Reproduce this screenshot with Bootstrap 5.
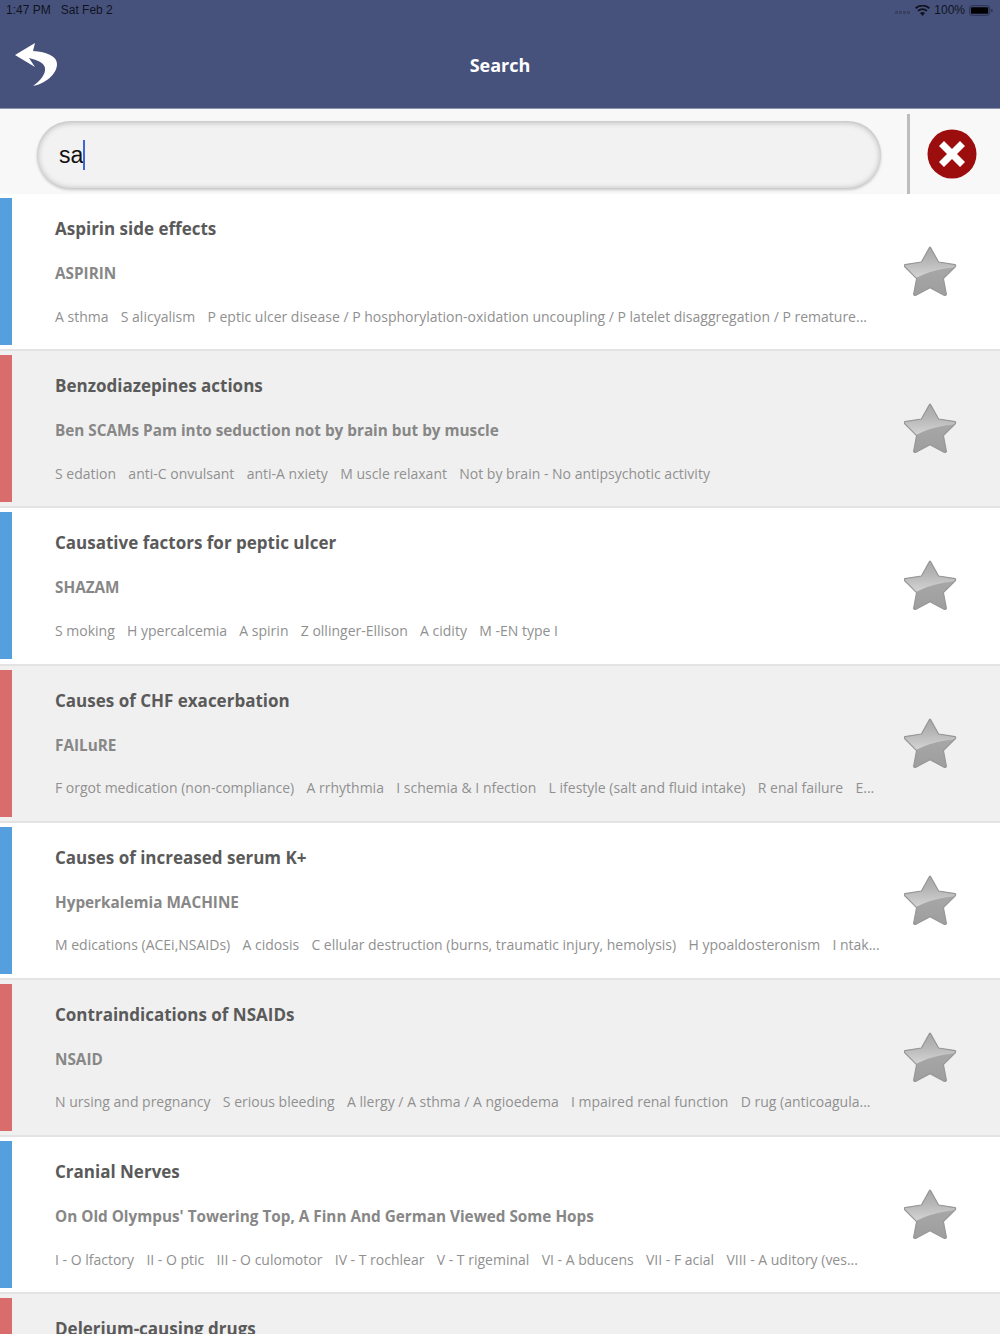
<!DOCTYPE html>
<html lang="en">
<head>
    <meta charset="UTF-8">
    <title>Search</title>
    <link href="https://cdn.jsdelivr.net/npm/bootstrap@5.3.0/dist/css/bootstrap.min.css" rel="stylesheet">
    <style>
        body { font-family: "Open Sans", sans-serif; background: #fff; height: 1334px; overflow: hidden; }

        /* Header */
        .top-head { background: #47527c; height: 109px; border-bottom: 1px solid #8d94b0; }
        .status-row { height: 20px; padding: 0 7px 0 6px; font-family: "Liberation Sans", sans-serif; font-size: 12px; color: #10131f; line-height: 20px; }
        .sat-date { margin-left: 10px; }
        .head-main { height: 88px; padding-left: 15px; }
        .back-icon { width: 44px; height: 45px; }
        .head-title { left: 0; right: 0; top: 52px; text-align: center; font-size: 18px; font-weight: 700; color: #fff; line-height: 26px; }

        /* Search */
        .search-row { height: 85px; background: #f8f8f8; padding-left: 37px; }
        .search-pill { width: 844px; height: 67px; margin-top: 12px; border-radius: 34px; background: #f2f2f2; padding-left: 22px; font-family: "Liberation Sans", sans-serif; font-size: 23px; color: #111; box-shadow: inset 0 1px 6px rgba(0,0,0,.28), 0 2px 3px rgba(0,0,0,.2); }
        .search-text { margin-top: 2px; }
        .caret-bar { width: 2px; height: 30px; background: #3f66d8; }
        .search-div { width: 3px; height: 80px; margin: 5px 0 0 26px; background: #bdbdbd; }
        .clear-icon { width: 50px; height: 50px; margin: 20px 0 0 17px; }

        /* Rows */
        .memo-row { height: 157.2px; padding-top: 4px; border-bottom: 2px solid #e3e3e3; }
        .memo-row.alt { background: #f0f0f0; }
        .color-bar { width: 12px; height: 147px; flex: none; background: #559fde; }
        .alt .color-bar { background: #d96c6c; }
        .memo-body { width: 835px; padding: 19px 0 0 43px; flex: none; }
        .memo-title { font-size: 17px; font-weight: 700; color: #5a5a5a; line-height: 24px; white-space: nowrap; }
        .memo-sub { font-size: 15.3px; font-weight: 700; color: #878787; line-height: 22px; margin-top: 21px; white-space: nowrap; }
        .memo-items { font-size: 14px; color: #909090; line-height: 20px; margin-top: 22.5px; white-space: nowrap; }
        .memo-items span { margin-right: 12.3px; }
        .star-icon { width: 54px; height: 52px; margin: 48px 0 0 57px; }
    </style>
</head>
<body>

<svg width="0" height="0" class="d-block">
    <defs>
        <linearGradient id="starBase" x1="0" y1="0" x2="0" y2="1">
            <stop offset="0" stop-color="#adadad"/>
            <stop offset="1" stop-color="#9e9e9e"/>
        </linearGradient>
        <linearGradient id="starGloss" x1="0" y1="0" x2="0" y2="1">
            <stop offset="0" stop-color="#a6a6a6"/>
            <stop offset="0.4" stop-color="#b4b4b4"/>
            <stop offset="1" stop-color="#d6d6d6"/>
        </linearGradient>
        <clipPath id="starClip">
            <path id="starShape" d="M26.4 1.4 L34.6 16 L51 18.6 Q52.4 19.6 51 21 L39.4 32.6 L42.4 48.4 Q41.6 50 40 49.2 L26 41.6 L12 49.2 Q10.4 50 9.6 48.4 L12.6 32.6 L1 21 Q-0.4 19.6 1 18.6 L17.4 16 L25.6 1.4 Q26 0.8 26.4 1.4 Z"/>
        </clipPath>
        <symbol id="star" viewBox="0 0 54 52">
            <use href="#starShape" fill="url(#starBase)"/>
            <path d="M0 0 H54 V21 C40 22 24 25 10 33 L0 24 Z" fill="url(#starGloss)" clip-path="url(#starClip)"/>
            <use href="#starShape" fill="none" stroke="#979797" stroke-width="1.2" stroke-linejoin="round"/>
        </symbol>
    </defs>
</svg>

<div class="top-head position-relative">
    <div class="status-row d-flex align-items-center">
        <span>1:47 PM</span>
        <span class="sat-date">Sat Feb 2</span>
        <span class="ms-auto d-flex align-items-center gap-1">
            <svg width="16" height="4" viewBox="0 0 16 4" class="mt-1"><g fill="#3b4261"><rect x="0" y="1" width="3" height="3"/><rect x="4" y="1" width="3" height="3"/><rect x="8" y="1" width="3" height="3"/><rect x="12" y="1" width="3" height="3"/></g></svg>
            <svg width="15" height="11" viewBox="0 0 15 11"><path d="M7.5 11 L5 8 A4 4 0 0 1 10 8 Z M3.6 6.6 L2.4 5.2 A8 8 0 0 1 12.6 5.2 L11.4 6.6 A6 6 0 0 0 3.6 6.6 Z M1.3 3.9 L0 2.5 A11.5 11.5 0 0 1 15 2.5 L13.7 3.9 A9.5 9.5 0 0 0 1.3 3.9 Z" fill="#10131f"/></svg>
            <span>100%</span>
            <svg width="24" height="11" viewBox="0 0 25 11"><rect x="0.5" y="0.5" width="21" height="10" rx="2.5" fill="none" stroke="#2a3050"/><rect x="2" y="2" width="18" height="7" rx="1" fill="#000"/><rect x="23" y="4" width="1.5" height="3" fill="#2a3050"/></svg>
        </span>
    </div>
    <div class="head-main d-flex align-items-center">
        <svg class="back-icon" viewBox="15 42 44 45">
            <path d="M15 55 L35 43 L33 51 C47 52 57 56 57 64 C57 75 44 84 33 86 C40 81 46 74 45 68 C44 62 36 60 29 58 L35 67 Z" fill="#fff"/>
        </svg>
    </div>
    <div class="head-title position-absolute">Search</div>
</div>

<div class="search-row d-flex">
    <div class="search-pill d-flex align-items-center">
        <span class="search-text">sa</span><span class="caret-bar"></span>
    </div>
    <div class="search-div"></div>
    <svg class="clear-icon" viewBox="0 0 50 50">
        <circle cx="25" cy="25" r="24.5" fill="#9c0d0d"/>
        <path d="M12 17 L17 12 L25 20 L33 12 L38 17 L30 25 L38 33 L33 38 L25 30 L17 38 L12 33 L20 25 Z" fill="#fff"/>
    </svg>
</div>

<div id="rows"></div>

<script>
    const memos = [
        ["Aspirin side effects", "ASPIRIN", ["A sthma", "S alicyalism", "P eptic ulcer disease / P hosphorylation-oxidation uncoupling / P latelet disaggregation / P remature..."]],
        ["Benzodiazepines actions", "Ben SCAMs Pam into seduction not by brain but by muscle", ["S edation", "anti-C onvulsant", "anti-A nxiety", "M uscle relaxant", "Not by brain - No antipsychotic activity"]],
        ["Causative factors for peptic ulcer", "SHAZAM", ["S moking", "H ypercalcemia", "A spirin", "Z ollinger-Ellison", "A cidity", "M -EN type I"]],
        ["Causes of CHF exacerbation", "FAILuRE", ["F orgot medication (non-compliance)", "A rrhythmia", "I schemia &amp; I nfection", "L ifestyle (salt and fluid intake)", "R enal failure", "E..."]],
        ["Causes of increased serum K+", "Hyperkalemia MACHINE", ["M edications (ACEi,NSAIDs)", "A cidosis", "C ellular destruction (burns, traumatic injury, hemolysis)", "H ypoaldosteronism", "I ntak..."]],
        ["Contraindications of NSAIDs", "NSAID", ["N ursing and pregnancy", "S erious bleeding", "A llergy / A sthma / A ngioedema", "I mpaired renal function", "D rug (anticoagula..."]],
        ["Cranial Nerves", "On Old Olympus' Towering Top, A Finn And German Viewed Some Hops", ["I - O lfactory", "II - O ptic", "III - O culomotor", "IV - T rochlear", "V - T rigeminal", "VI - A bducens", "VII - F acial", "VIII - A uditory (ves..."]],
        ["Delerium-causing drugs", "", []]
    ];

    document.getElementById("rows").innerHTML = memos.map((m, i) => `
        <div class="memo-row d-flex ${i % 2 ? "alt" : ""}">
            <div class="color-bar"></div>
            <div class="memo-body">
                <div class="memo-title">${m[0]}</div>
                <div class="memo-sub">${m[1]}</div>
                <div class="memo-items">${m[2].map(t => `<span>${t}</span>`).join("")}</div>
            </div>
            <svg class="star-icon"><use href="#star"/></svg>
        </div>`).join("");
</script>

<script src="https://cdn.jsdelivr.net/npm/bootstrap@5.3.0/dist/js/bootstrap.bundle.min.js"></script>
</body>
</html>
